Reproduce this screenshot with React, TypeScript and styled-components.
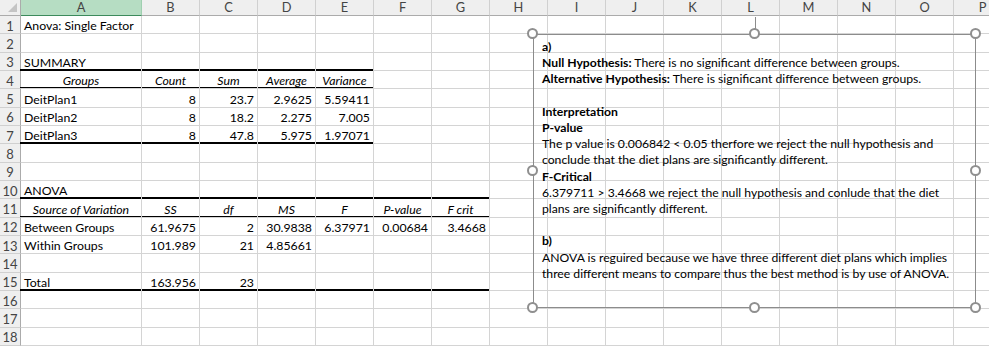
import React from 'react';
import styled, { createGlobalStyle, css } from 'styled-components';

const GRID = '#d4d4d4';
const FONT = `Lato, "Open Sans", "DejaVu Sans", sans-serif`;

const GlobalStyle = createGlobalStyle`
  html, body { margin: 0; padding: 0; background: #fff; }
  body { font-family: ${FONT}; overflow: hidden; }
`;

const Sheet = styled.div`
  position: relative;
  width: 989px;
  height: 347px;
  overflow: hidden;
  background: #fff;
`;

const Grid = styled.div`
  display: grid;
  grid-template-columns: 21px 121px repeat(15, 58px);
  grid-template-rows: 16px repeat(18, 18.333px);
  width: max-content;
  font-size: 12.3px;
  color: #000;
`;

const Corner = styled.div`
  position: relative;
  background: #efefef;
  border-right: 1px solid #ababab;
  border-bottom: 1px solid #ababab;
  box-sizing: border-box;
  &::after {
    content: '';
    position: absolute;
    right: 3px;
    bottom: 3px;
    width: 0;
    height: 0;
    border-left: 9px solid transparent;
    border-bottom: 9px solid #c4c4c4;
  }
`;

const ColHeader = styled.div<{ $active?: boolean }>`
  box-sizing: border-box;
  display: flex;
  align-items: center;
  justify-content: center;
  background: ${(p) => (p.$active ? '#b6ddc3' : '#efefef')};
  color: #444;
  border-right: 1px solid ${(p) => (p.$active ? '#9fcfb0' : '#d0d0d0')};
  border-bottom: 1px solid ${(p) => (p.$active ? '#3c8a5c' : '#ababab')};
  font-size: 12.8px;
  line-height: 15px;
`;

const RowHeader = styled.div`
  box-sizing: border-box;
  display: flex;
  align-items: center;
  justify-content: center;
  background: #efefef;
  color: #444;
  border-right: 1px solid #ababab;
  border-bottom: 1px solid #d0d0d0;
  font-size: 13px;
  padding-top: 2px;
`;

type Align = 'left' | 'right' | 'center';

const Cell = styled.div<{ $align: Align; $italic?: boolean; $rule?: number; $first?: boolean }>`
  position: relative;
  box-sizing: border-box;
  display: flex;
  align-items: flex-end;
  justify-content: ${(p) =>
    p.$align === 'right' ? 'flex-end' : p.$align === 'center' ? 'center' : 'flex-start'};
  padding: 0 3px 0 3px;
  border-right: 1px solid ${GRID};
  border-bottom: 1px solid ${GRID};
  white-space: nowrap;
  line-height: 14px;
  color: #000;
  font-style: ${(p) => (p.$italic ? 'italic' : 'normal')};
  ${(p) =>
    p.$rule &&
    css`
      &::after {
        content: '';
        position: absolute;
        z-index: 1;
        left: ${p.$first ? '-1px' : '0'};
        right: 0;
        bottom: ${p.$rule > 1 ? '-1px' : '-0px'};
        height: ${p.$rule}px;
        background: #000;
      }
    `}
`;

const Frame = styled.div`
  position: absolute;
  z-index: 2;
  left: 533px;
  top: 34px;
  width: 443px;
  height: 274px;
  box-sizing: border-box;
  border: 1px solid #8c8c8c;
`;

const RotLine = styled.span`
  position: absolute;
  left: 221px;
  top: -18px;
  width: 1px;
  height: 17px;
  background: #8c8c8c;
`;

const Handle = styled.span<{ $x: number; $y: number }>`
  position: absolute;
  left: calc(${(p) => p.$x} * (100% + 2px) - 7px);
  top: calc(${(p) => p.$y} * (100% + 2px) - 7px);
  width: 11px;
  height: 11px;
  box-sizing: border-box;
  border-radius: 50%;
  border: 2px solid #8f8f8f;
  background: #fff;
`;

const TextBody = styled.div`
  padding: 4px 8px;
  font-size: 12.2px;
  line-height: 16.2px;
  color: #000;
`;

const Line = styled.div`
  white-space: nowrap;
  min-height: 16.2px;
`;

const B = styled.b`
  font-weight: 700;
`;

const COLS = ['A', 'B', 'C', 'D', 'E', 'F', 'G', 'H', 'I', 'J', 'K', 'L', 'M', 'N', 'O', 'P'];

type RowDef = { cells?: string[]; head?: boolean; rule?: { span: number; weight: number } };

const ROWS: RowDef[] = [
  { cells: ['Anova: Single Factor'] },
  {},
  { cells: ['SUMMARY'], rule: { span: 5, weight: 2 } },
  { cells: ['Groups', 'Count', 'Sum', 'Average', 'Variance'], head: true, rule: { span: 5, weight: 1 } },
  { cells: ['DeitPlan1', '8', '23.7', '2.9625', '5.59411'] },
  { cells: ['DeitPlan2', '8', '18.2', '2.275', '7.005'] },
  { cells: ['DeitPlan3', '8', '47.8', '5.975', '1.97071'], rule: { span: 5, weight: 2 } },
  {},
  {},
  { cells: ['ANOVA'], rule: { span: 7, weight: 2 } },
  {
    cells: ['Source of Variation', 'SS', 'df', 'MS', 'F', 'P-value', 'F crit'],
    head: true,
    rule: { span: 7, weight: 1 },
  },
  { cells: ['Between Groups', '61.9675', '2', '30.9838', '6.37971', '0.00684', '3.4668'] },
  { cells: ['Within Groups', '101.989', '21', '4.85661'] },
  {},
  { cells: ['Total', '163.956', '23'], rule: { span: 7, weight: 2 } },
  {},
  {},
  {},
];

const isNum = (s: string) => /^-?\d+(\.\d+)?$/.test(s);

const HANDLES: [number, number][] = [
  [0, 0],
  [0.5, 0],
  [1, 0],
  [0, 0.5],
  [1, 0.5],
  [0, 1],
  [0.5, 1],
  [1, 1],
];

export default function App() {
  return (
    <>
      <GlobalStyle />
      <Sheet>
        <Grid>
          <Corner />
          {COLS.map((c) => (
            <ColHeader key={c} $active={c === 'A'}>
              {c}
            </ColHeader>
          ))}
          {ROWS.map((row, ri) => (
            <React.Fragment key={ri}>
              <RowHeader>{ri + 1}</RowHeader>
              {COLS.map((c, ci) => {
                const v = row.cells?.[ci] ?? '';
                const align: Align = row.head ? 'center' : isNum(v) ? 'right' : 'left';
                const rule = row.rule && ci < row.rule.span ? row.rule.weight : undefined;
                return (
                  <Cell key={c} $align={align} $italic={row.head} $rule={rule} $first={ci === 0}>
                    {v}
                  </Cell>
                );
              })}
            </React.Fragment>
          ))}
        </Grid>
        <Frame>
          <RotLine />
          {HANDLES.map(([x, y], i) => (
            <Handle key={i} $x={x} $y={y} />
          ))}
          <TextBody>
            <Line>
              <B>a)</B>
            </Line>
            <Line>
              <B>Null Hypothesis:</B> There is no significant difference between groups.
            </Line>
            <Line>
              <B>Alternative Hypothesis:</B> There is significant difference between groups.
            </Line>
            <Line />
            <Line>
              <B>Interpretation</B>
            </Line>
            <Line>
              <B>P-value</B>
            </Line>
            <Line>The p value is 0.006842 &lt; 0.05 therfore we reject the null hypothesis and</Line>
            <Line>conclude that the diet plans are significantly different.</Line>
            <Line>
              <B>F-Critical</B>
            </Line>
            <Line>6.379711 &gt; 3.4668 we reject the null hypothesis and conlude that the diet</Line>
            <Line>plans are significantly different.</Line>
            <Line />
            <Line>
              <B>b)</B>
            </Line>
            <Line>ANOVA is reguired because we have three different diet plans which implies</Line>
            <Line>three different means to compare thus the best method is by use of ANOVA.</Line>
          </TextBody>
        </Frame>
      </Sheet>
    </>
  );
}
